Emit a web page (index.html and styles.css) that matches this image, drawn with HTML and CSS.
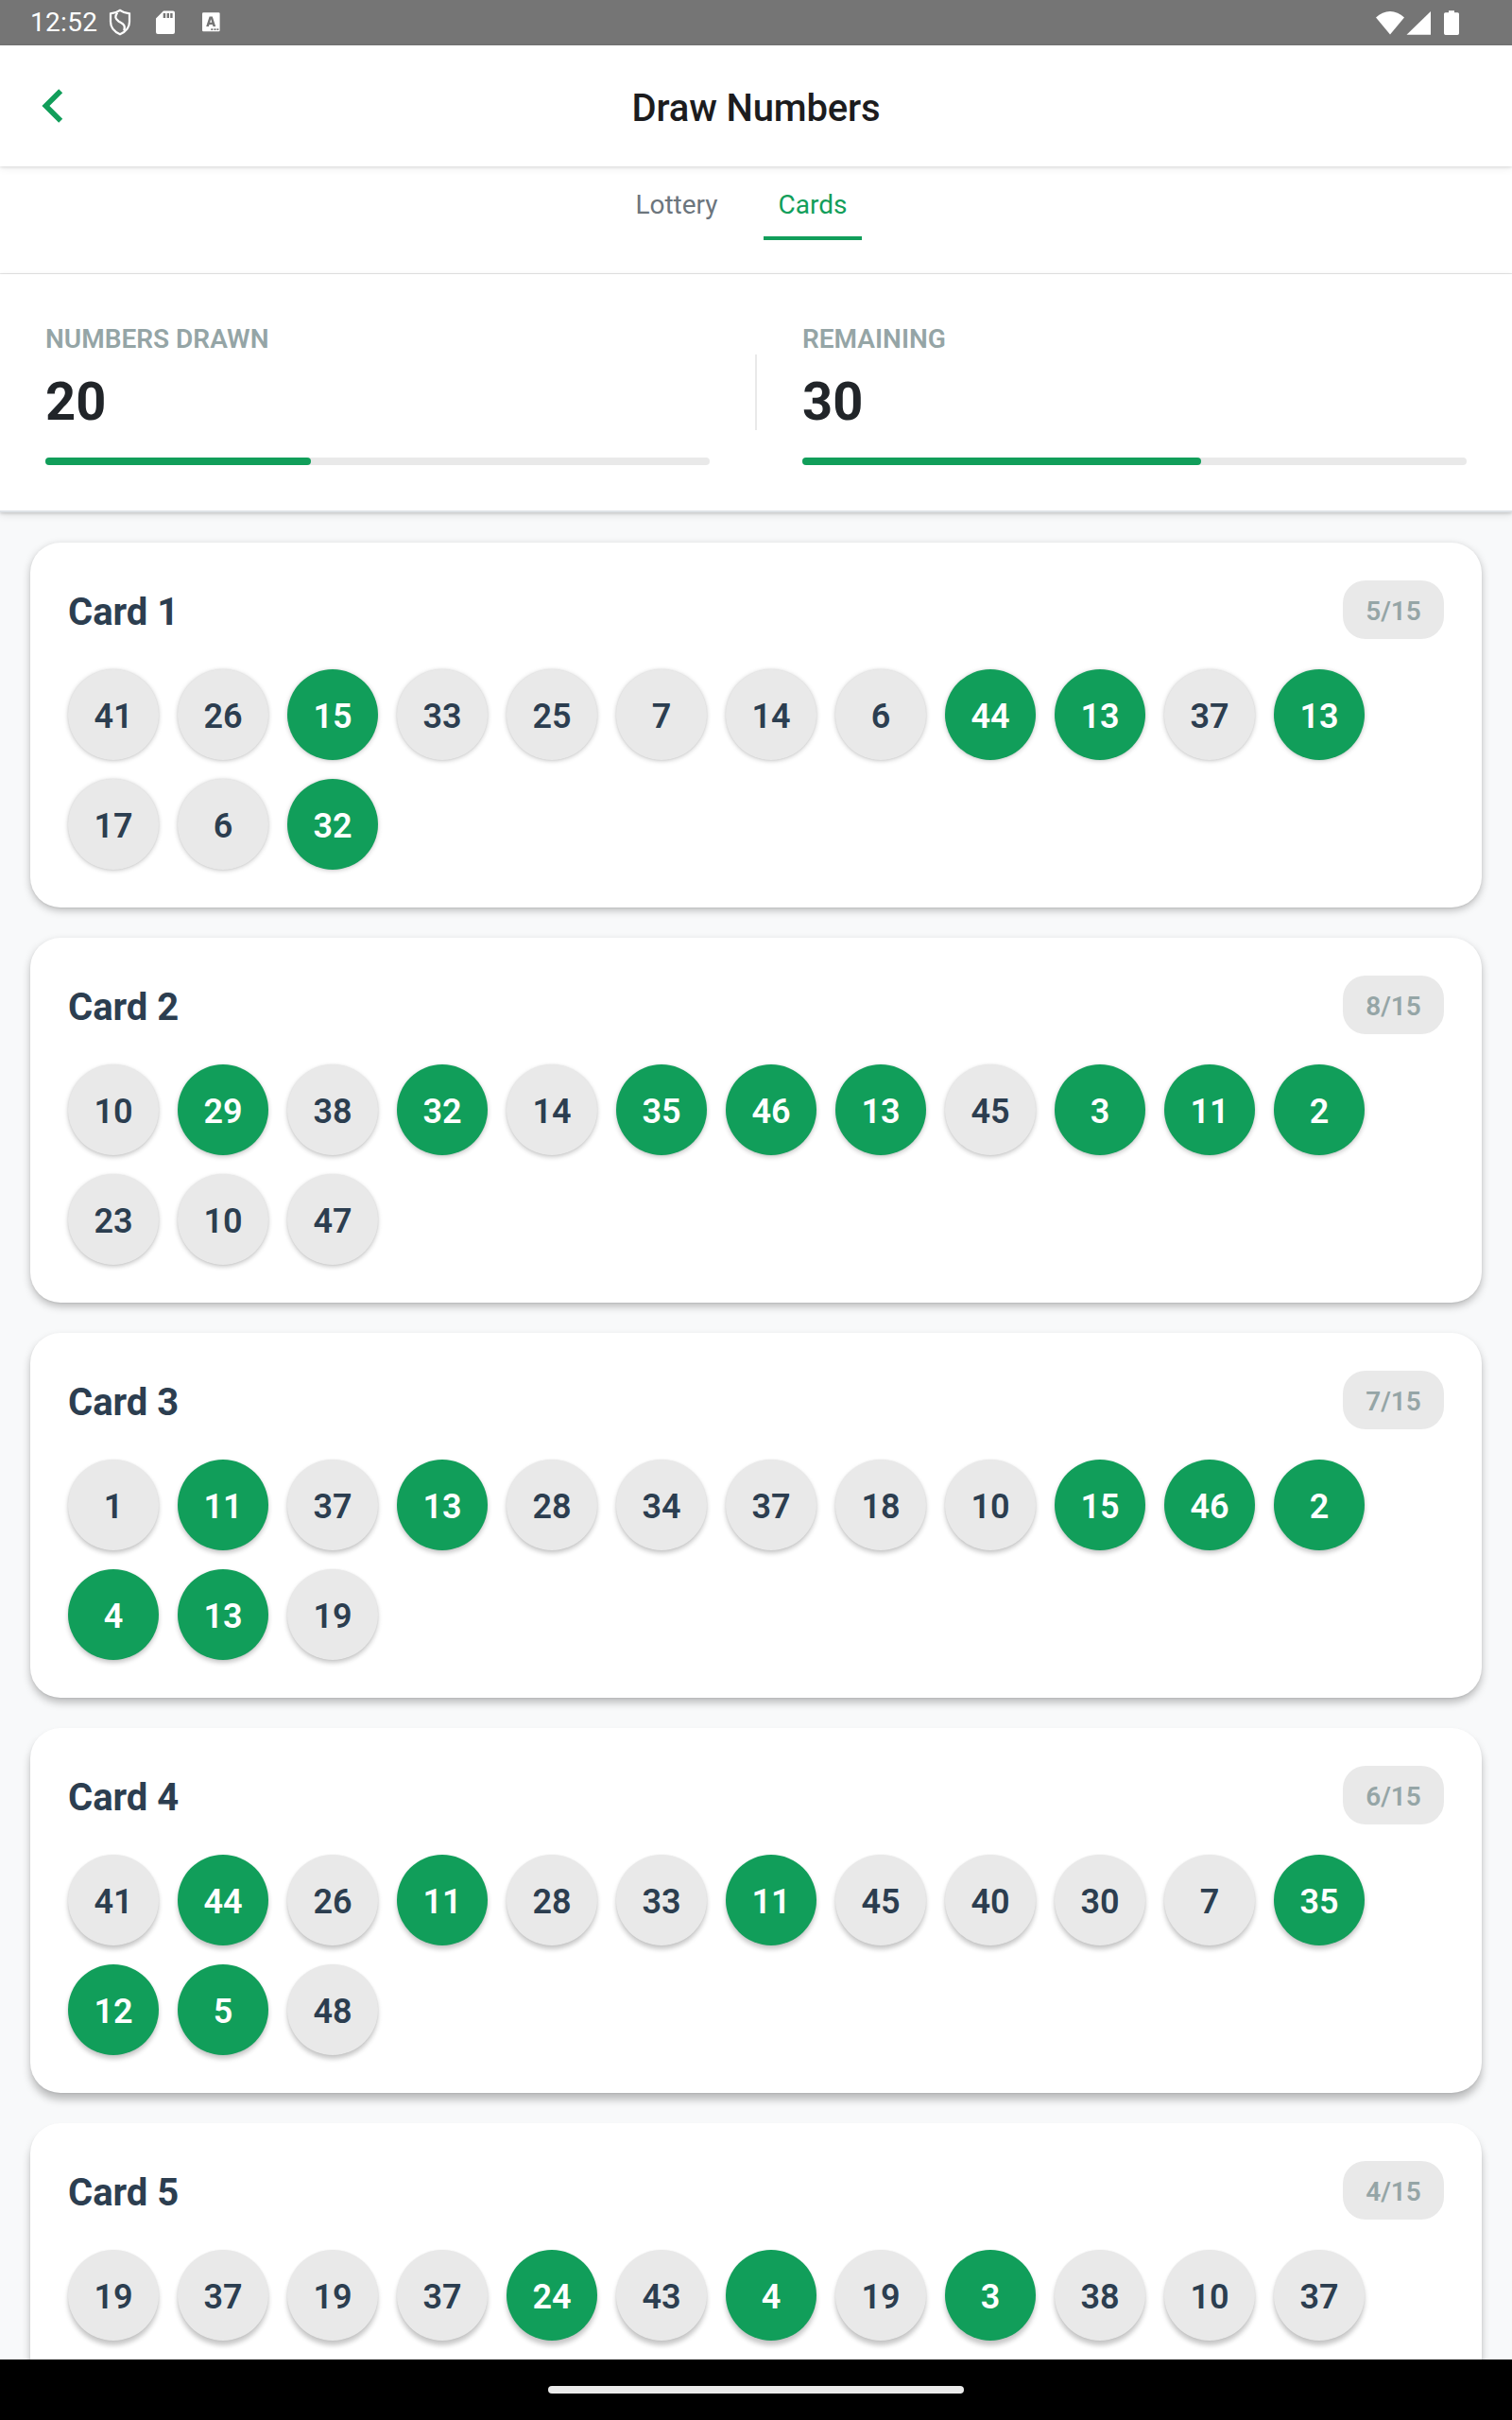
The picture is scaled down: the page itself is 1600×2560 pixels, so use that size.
FILE: index.html
```html
<!DOCTYPE html>
<html lang="en">
<head>
<meta charset="utf-8">
<title>Draw Numbers</title>
<link rel="stylesheet" href="styles.css">
</head>
<body>
<div class="screen">
  <div class="status-bar">
    <span class="clock">12:52</span>
    <svg class="status-icon shield" width="24" height="30" viewBox="0 0 24 30" fill="none" stroke="#fff" stroke-width="2.2">
      <path d="M12 1.8C8.6 4.3 5.4 5 2 5.4V14c0 6 4 10.600 10 13.200C18 24.600 22 20 22 14V5.400C18.600 5 15.400 4.300 12 1.800Z"/>
      <path d="M9.300 4.500C5.800 8.500 7.200 11 10.500 13.500C14.500 16 18.500 17 16.200 23.500"/>
    </svg>
    <svg class="status-icon sd" width="20" height="26" viewBox="0 0 20 26">
      <path fill="#fff" fill-rule="evenodd" d="M8 .5H18a2 2 0 0 1 2 2V23a2 2 0 0 1-2 2H2a2 2 0 0 1-2-2V8.500ZM7.700 3V8H10.200V3ZM11.600 3V8H14V3ZM15.200 3V8H17.600V3Z"/>
    </svg>
    <svg class="status-icon app" width="20" height="21" viewBox="0 0 20 21">
      <rect x="0" y="0.300" width="18.600" height="20" rx="1.200" fill="#fff"/>
      <path fill="#757575" fill-rule="evenodd" d="M7.600 4.500H10.800L14.200 15H11.500L10.900 13H7.500L6.900 15H4.200ZM9.200 7.300L8.200 10.800H10.200Z"/>
      <path fill="#757575" d="M9.300 17.200h2v1.800h-2zM12.500 17.200h2v1.800h-2zM15.500 17.200h1.800v1.800h-1.800z"/>
    </svg>
    <svg class="system-icons" width="90" height="28" viewBox="0 0 90 28" fill="#fff">
      <path d="M0 7.500C8.800-1.300 21.200-1.300 30 7.500L15 25.500Z"/>
      <path d="M58 1V25.700H32.500Z"/>
      <path d="M77 .2H83V2.300H86.500a1.500 1.500 0 0 1 1.500 1.500V24.300a1.700 1.700 0 0 1-1.700 1.700H73.700A1.700 1.700 0 0 1 72 24.300V3.800a1.500 1.500 0 0 1 1.500-1.500H77Z"/>
    </svg>
  </div>

  <header class="header">
    <svg class="back" width="24" height="36" viewBox="0 0 24 36">
      <path fill="#119e5a" d="M.4 18L18.200.2L22.200 4.200L8.400 18L22.200 31.800L18.200 35.800Z"/>
    </svg>
    <h1 class="title">Draw Numbers</h1>
  </header>

  <nav class="tabs">
    <a class="tab tab-lottery">Lottery</a>
    <a class="tab tab-cards tab-active">Cards</a>
  </nav>

  <section class="stats">
    <div class="stat">
      <div class="stat-label">NUMBERS DRAWN</div>
      <div class="stat-value">20</div>
      <div class="progress"><div class="progress-fill" style="width:40%"></div></div>
    </div>
    <div class="divider"></div>
    <div class="stat">
      <div class="stat-label">REMAINING</div>
      <div class="stat-value">30</div>
      <div class="progress"><div class="progress-fill" style="width:60%"></div></div>
    </div>
  </section>

  <main class="cards">
    <article class="card depth-1">
      <div class="card-head"><h2 class="card-title">Card 1</h2><span class="badge">5/15</span></div>
      <div class="balls">
        <span class="ball">41</span><span class="ball">26</span><span class="ball hit">15</span><span class="ball">33</span><span class="ball">25</span><span class="ball">7</span><span class="ball">14</span><span class="ball">6</span><span class="ball hit">44</span><span class="ball hit">13</span><span class="ball">37</span><span class="ball hit">13</span>
        <span class="ball">17</span><span class="ball">6</span><span class="ball hit">32</span>
      </div>
    </article>
    <article class="card depth-2">
      <div class="card-head"><h2 class="card-title">Card 2</h2><span class="badge">8/15</span></div>
      <div class="balls">
        <span class="ball">10</span><span class="ball hit">29</span><span class="ball">38</span><span class="ball hit">32</span><span class="ball">14</span><span class="ball hit">35</span><span class="ball hit">46</span><span class="ball hit">13</span><span class="ball">45</span><span class="ball hit">3</span><span class="ball hit">11</span><span class="ball hit">2</span>
        <span class="ball">23</span><span class="ball">10</span><span class="ball">47</span>
      </div>
    </article>
    <article class="card depth-3">
      <div class="card-head"><h2 class="card-title">Card 3</h2><span class="badge">7/15</span></div>
      <div class="balls">
        <span class="ball">1</span><span class="ball hit">11</span><span class="ball">37</span><span class="ball hit">13</span><span class="ball">28</span><span class="ball">34</span><span class="ball">37</span><span class="ball">18</span><span class="ball">10</span><span class="ball hit">15</span><span class="ball hit">46</span><span class="ball hit">2</span>
        <span class="ball hit">4</span><span class="ball hit">13</span><span class="ball">19</span>
      </div>
    </article>
    <article class="card depth-4">
      <div class="card-head"><h2 class="card-title">Card 4</h2><span class="badge">6/15</span></div>
      <div class="balls">
        <span class="ball">41</span><span class="ball hit">44</span><span class="ball">26</span><span class="ball hit">11</span><span class="ball">28</span><span class="ball">33</span><span class="ball hit">11</span><span class="ball">45</span><span class="ball">40</span><span class="ball">30</span><span class="ball">7</span><span class="ball hit">35</span>
        <span class="ball hit">12</span><span class="ball hit">5</span><span class="ball">48</span>
      </div>
    </article>
    <article class="card depth-5">
      <div class="card-head"><h2 class="card-title">Card 5</h2><span class="badge">4/15</span></div>
      <div class="balls">
        <span class="ball">19</span><span class="ball">37</span><span class="ball">19</span><span class="ball">37</span><span class="ball hit">24</span><span class="ball">43</span><span class="ball hit">4</span><span class="ball">19</span><span class="ball hit">3</span><span class="ball">38</span><span class="ball">10</span><span class="ball">37</span>
      </div>
    </article>
  </main>

  <div class="nav-bar"><div class="nav-handle"></div></div>
</div>
</body>
</html>
```
FILE: styles.css
```css
* { box-sizing: border-box; }

body {
  margin: 0;
  font-family: Roboto, "Liberation Sans", sans-serif;
  background: #f8f9fa;
}

.screen {
  width: 1600px;
  height: 2560px;
  display: flex;
  flex-direction: column;
  overflow: hidden;
}

.status-bar {
  flex: none;
  height: 48px;
  padding: 0 54px 0 32px;
  display: flex;
  align-items: flex-start;
  background: #757575;
  color: #fff;
}

.clock {
  width: 84px;
  font-size: 28px;
  letter-spacing: .3px;
  line-height: 48px;
}

.status-icon { flex: none; }
.shield { margin-top: 9px; margin-left: -1px; }
.sd { margin: 11px 0 0 26px; }
.app { margin: 13px 0 0 29px; }
.system-icons { margin: 11px 0 0 auto; }

.header {
  flex: none;
  height: 128px;
  padding: 0 44px;
  display: grid;
  grid-template-columns: 24px 1fr 24px;
  align-items: center;
  background: #fff;
  box-shadow: 0 1px 3px rgba(0, 0, 0, .12), 0 3px 8px rgba(0, 0, 0, .06);
  z-index: 1;
}

.title {
  margin: 0;
  padding-top: 6px;
  text-align: center;
  font-size: 40px;
  font-weight: 500;
  letter-spacing: -.15px;
  line-height: 48px;
  color: #1c1c1e;
}

.tabs {
  flex: none;
  height: 114px;
  padding-top: 16px;
  display: flex;
  justify-content: center;
  align-items: flex-start;
  background: #fff;
  border-bottom: 1px solid #e9e9e9;
}

.tab {
  height: 62px;
  margin-right: 32px;
  text-align: center;
  font-size: 28px;
  line-height: 50px;
  color: #6c757d;
  border-bottom: 4px solid transparent;
}

.tab-lottery { width: 120px; }
.tab-cards { width: 104px; }

.tab-active {
  color: #119e5a;
  border-color: #119e5a;
}

.stats {
  flex: none;
  height: 252px;
  display: flex;
  align-items: center;
  background: #fff;
  border-bottom: 2px solid #dee2e6;
  box-shadow: 0 1px 3px rgba(0, 0, 0, .17), 0 3px 8px rgba(0, 0, 0, .1);
}

.stat { flex: 1; padding: 48px; }

.stat-label {
  font-size: 28px;
  font-weight: 600;
  line-height: 42px;
  color: #95a5a6;
}

.stat-value {
  margin: 12px 0 26px;
  font-size: 56px;
  font-weight: 700;
  line-height: 66px;
  color: #212529;
}

.progress {
  height: 8px;
  border-radius: 4px;
  background: #e9e9e9;
}

.progress-fill {
  height: 8px;
  border-radius: 4px;
  background: #119e5a;
}

.divider { width: 2px; height: 80px; background: #e9e9e9; }

.cards {
  flex: 1;
  min-height: 0;
  padding: 32px;
  display: flex;
  flex-direction: column;
  gap: 32px;
  overflow: hidden;
}

.card {
  flex: none;
  height: 386px;
  padding: 40px;
  border-radius: 32px;
  background: #fff;
  box-shadow: 0 1px 2px rgba(0, 0, 0, .06), 0 var(--drop) 9px rgba(0, 0, 0, .25);
}

.depth-1 { --drop: 3px; --ball-drop: 1px; }
.depth-2 { --drop: 4px; --ball-drop: 2px; }
.depth-3 { --drop: 5px; --ball-drop: 3px; }
.depth-4 { --drop: 7px; --ball-drop: 4px; }
.depth-5 { --drop: 8px; --ball-drop: 5px; }

.card-head {
  height: 62px;
  margin-bottom: 32px;
  display: flex;
  justify-content: space-between;
  align-items: center;
}

.card-title {
  margin: 0;
  padding-top: 6px;
  font-size: 40px;
  font-weight: 700;
  line-height: 48px;
  color: #2c3e50;
}

.badge {
  width: 107px;
  height: 62px;
  padding-top: 2px;
  border-radius: 24px;
  background: #e9e9e9;
  text-align: center;
  font-size: 28px;
  font-weight: 600;
  line-height: 62px;
  color: #95a5a6;
}

.balls { display: flex; flex-wrap: wrap; gap: 20px; }

.ball {
  width: 96px;
  height: 96px;
  padding-top: 2px;
  border-radius: 50%;
  background: #e9e9e9;
  box-shadow: 0 0 2px rgba(0, 0, 0, .07), 0 var(--ball-drop) 5px rgba(0, 0, 0, .22);
  text-align: center;
  font-size: 36px;
  font-weight: 600;
  line-height: 96px;
  color: #2c3e50;
}

.hit { background: #119e5a; color: #fff; }

.nav-bar {
  flex: none;
  height: 64px;
  padding-top: 28px;
  background: #000;
}

.nav-handle {
  width: 440px;
  height: 8px;
  margin: 0 auto;
  border-radius: 4px;
  background: #ebebeb;
}
```
